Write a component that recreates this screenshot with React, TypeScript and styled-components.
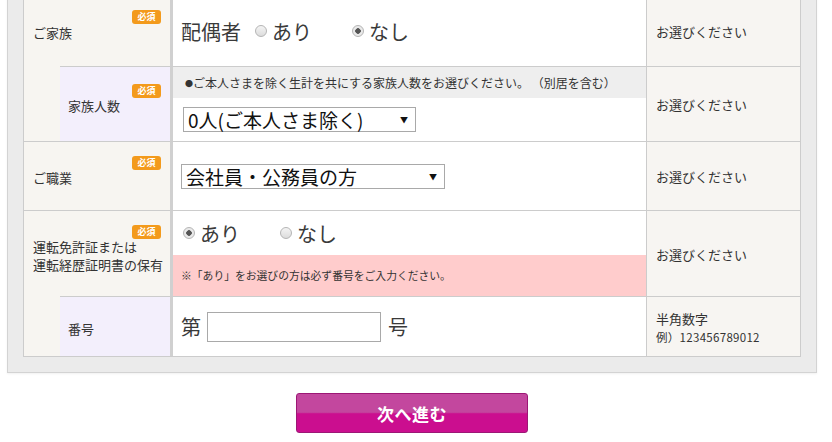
import React from 'react'
import styled, { createGlobalStyle } from 'styled-components'

const GlobalStyle = createGlobalStyle`
  * { box-sizing: border-box; }
  body {
    margin: 0;
    background: #fff;
    color: #333;
    font-family: "Noto Sans CJK JP", "Noto Sans", sans-serif;
    overflow: hidden;
  }
`

const Page = styled.div`
  width: 832px;
  padding-left: 7px;
`

const Panel = styled.section`
  width: 810px;
  margin-top: -21px;
  padding: 15px;
  background: #ebebeb;
  border: 1px solid #d3d3d3;
  box-shadow: 0 1px 2px rgba(0, 0, 0, 0.06);
`

const Table = styled.div`
  display: grid;
  grid-template-columns: 36px 110px 476px 154px;
  grid-template-rows: 70px 75px 69px 86px 60px;
  background: #fff;
  border: 1px solid #ccc;
`

const Cell = styled.div<{ $first?: boolean }>`
  border-top: ${(p) => (p.$first ? 'none' : '1px solid #ccc')};
`

const Label = styled(Cell)`
  grid-column: span 2;
  position: relative;
  display: flex;
  flex-direction: column;
  justify-content: center;
  padding: 4px 0 0 9px;
  background: #f7f5f1;
  font-size: 13px;
  line-height: 18px;
`

const Indent = styled.div`
  background: #f7f5f1;
`

const SubLabel = styled(Cell)`
  position: relative;
  display: flex;
  flex-direction: column;
  justify-content: center;
  padding: 4px 0 0 8px;
  background: #f3effc;
  font-size: 13px;
  line-height: 18px;
`

const Badge = styled.span<{ $top: number }>`
  position: absolute;
  top: ${(p) => p.$top}px;
  right: 9px;
  width: 29px;
  height: 14px;
  border-radius: 3px;
  background: #f39a1c;
  color: #fff;
  font-size: 9px;
  font-weight: 700;
  line-height: 14px;
  text-align: center;
`

const Content = styled(Cell)`
  display: flex;
  flex-direction: column;
  border-left: 3px solid #d0d0d0;
`

const Line = styled.div<{ $pad?: number }>`
  flex: 1;
  display: flex;
  align-items: center;
  padding-left: ${(p) => p.$pad ?? 8}px;
  color: #3a3a3a;
  font-size: 20px;
`

const Hint = styled.div`
  height: 31px;
  padding-left: 12px;
  background: #eeeeee;
  font-size: 12px;
  line-height: 31px;
  white-space: nowrap;
`

const Bullet = styled.span`
  font-size: 8px;
  vertical-align: 1px;
`

const Warning = styled.div`
  height: 41px;
  padding-left: 8px;
  background: #ffcccc;
  font-size: 10.8px;
  line-height: 41px;
  white-space: nowrap;
`

const Note = styled(Cell)`
  display: flex;
  flex-direction: column;
  justify-content: center;
  padding: 2px 0 0 9px;
  border-left: 1px solid #ccc;
  background: #f7f5f2;
  font-size: 13px;
  line-height: 18px;
`

const Small = styled.span`
  font-size: 11.5px;
  letter-spacing: 0.3px;
`

const Caption = styled.span`
  margin-right: 14px;
`

const Option = styled.label`
  display: flex;
  align-items: center;
  gap: 5px;
  margin-right: 40px;
`

const Dot = styled.span<{ $on?: boolean }>`
  width: 12px;
  height: 12px;
  border-radius: 50%;
  border: 1px solid #b5b5b5;
  background: ${(p) =>
    p.$on
      ? 'radial-gradient(circle, #555 0 2.5px, #e9e9e9 3px)'
      : 'linear-gradient(#f4f4f4, #dcdcdc)'};
`

const Select = styled.div<{ $w: number }>`
  width: ${(p) => p.$w}px;
  height: 25px;
  display: flex;
  align-items: center;
  justify-content: space-between;
  padding: 0 7px 0 4px;
  border: 1px solid #a9a9a9;
  color: #111;
  font-size: 19px;
  line-height: 23px;
  &::after {
    content: '▼';
    font-size: 8px;
  }
`

const Field = styled.input`
  width: 174px;
  height: 30px;
  margin: 0 7px 0 6px;
  border: 1px solid #a9a9a9;
  font-size: 16px;
`

const Footer = styled.div`
  width: 810px;
  display: flex;
  justify-content: center;
  padding-top: 20px;
`

const Next = styled.button`
  width: 232px;
  height: 40px;
  border: 1px solid #9c1775;
  border-radius: 3px;
  background: linear-gradient(#c3479e 0 48%, #cb0e8f 52% 100%);
  color: #fff;
  font-family: inherit;
  font-size: 17px;
  font-weight: 700;
  letter-spacing: 0.5px;
`

const Radio = ({ on, children }: { on?: boolean; children: React.ReactNode }) => (
  <Option>
    <Dot $on={on} />
    {children}
  </Option>
)

export default function App() {
  return (
    <Page>
      <GlobalStyle />
      <Panel>
        <Table>
          <Label $first>
            <Badge $top={14}>必須</Badge>
            ご家族
          </Label>
          <Content $first>
            <Line>
              <Caption>配偶者</Caption>
              <Radio>あり</Radio>
              <Radio on>なし</Radio>
            </Line>
          </Content>
          <Note $first>お選びください</Note>

          <Indent />
          <SubLabel>
            <Badge $top={17}>必須</Badge>
            家族人数
          </SubLabel>
          <Content>
            <Hint>
              <Bullet>●</Bullet>ご本人さまを除く生計を共にする家族人数をお選びください。 （別居を含む）
            </Hint>
            <Line $pad={10}>
              <Select $w={233}>0人(ご本人さま除く)</Select>
            </Line>
          </Content>
          <Note>お選びください</Note>

          <Label>
            <Badge $top={14}>必須</Badge>
            ご職業
          </Label>
          <Content>
            <Line>
              <Select $w={264}>会社員・公務員の方</Select>
            </Line>
          </Content>
          <Note>お選びください</Note>

          <Label>
            <Badge $top={14}>必須</Badge>
            運転免許証または
            <br />
            運転経歴証明書の保有
          </Label>
          <Content>
            <Line $pad={10}>
              <Radio on>あり</Radio>
              <Radio>なし</Radio>
            </Line>
            <Warning>※「あり」をお選びの方は必ず番号をご入力ください。</Warning>
          </Content>
          <Note>お選びください</Note>

          <Indent />
          <SubLabel>番号</SubLabel>
          <Content>
            <Line>
              第<Field type="text" />号
            </Line>
          </Content>
          <Note>
            半角数字
            <Small>例）123456789012</Small>
          </Note>
        </Table>
      </Panel>
      <Footer>
        <Next>次へ進む</Next>
      </Footer>
    </Page>
  )
}
